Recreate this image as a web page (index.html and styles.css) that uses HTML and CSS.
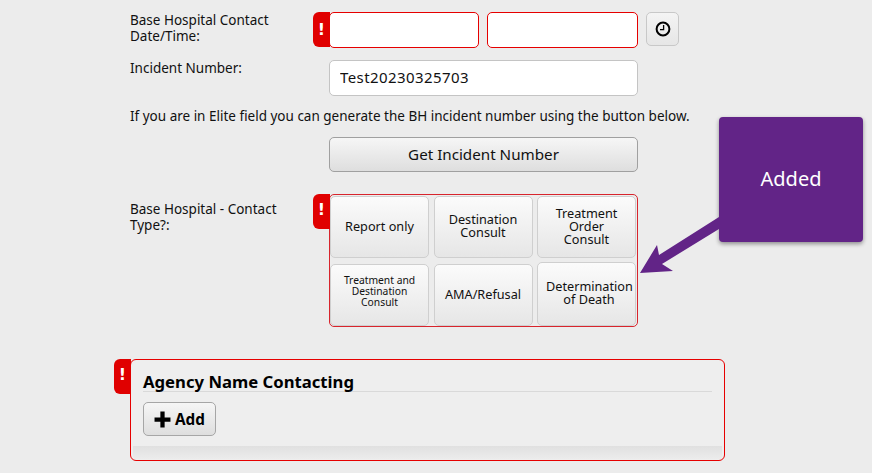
FILE: index.html
```html
<!DOCTYPE html>
<html lang="en">
<head>
<meta charset="utf-8">
<title>Base Hospital Contact</title>
<link rel="stylesheet" href="styles.css">
</head>
<body>
<main class="form">
  <div class="row row-date">
    <label class="label">Base Hospital Contact Date/Time:</label>
    <div class="control inline">
      <span class="badge">!</span>
      <input class="field field-req" type="text">
      <input class="field field-req field-req-last" type="text">
      <button class="clock" type="button" aria-label="Now">
        <svg width="16" height="16" viewBox="0 0 16 16"><circle cx="8" cy="8" r="6.400" fill="none" stroke="#000" stroke-width="2"/><path d="M8.600 4v4.600H5" fill="none" stroke="#000" stroke-width="1.300"/></svg>
      </button>
    </div>
  </div>
  <div class="row row-incident">
    <label class="label">Incident Number:</label>
    <div class="control"><input class="field field-wide" type="text" value="Test20230325703"></div>
  </div>
  <p class="hint">If you are in Elite field you can generate the BH incident number using the button below.</p>
  <div class="row row-get">
    <span class="label"></span>
    <div class="control"><button class="get" type="button">Get Incident Number</button></div>
  </div>
  <div class="row row-type">
    <label class="label">Base Hospital - Contact Type?:</label>
    <div class="control">
      <span class="badge">!</span>
      <div class="choices">
        <button class="choice" type="button">Report only</button>
        <button class="choice" type="button">Destination Consult</button>
        <button class="choice choice-narrow" type="button">Treatment Order Consult</button>
        <button class="choice choice-small" type="button">Treatment and Destination Consult</button>
        <button class="choice" type="button">AMA/Refusal</button>
        <button class="choice choice-up" type="button">Determination of Death</button>
      </div>
    </div>
  </div>
  <section class="card">
    <span class="badge badge-card">!</span>
    <h2 class="card-title">Agency Name Contacting</h2>
    <button class="add" type="button">
      <svg width="17" height="17" viewBox="0 0 16 16"><path d="M6 .5h4v5.500h5.500v4H10v5.500H6V10H.5V6H6z" fill="#000"/></svg>
      Add
    </button>
    <div class="card-foot"></div>
  </section>
</main>
<aside class="callout">Added</aside>
<svg class="arrow" width="90" height="65" viewBox="0 0 90 65"><path d="M81 0 L81 12 L24 47 L35 54 L2 56 L19 28 L21 38 Z" fill="#622487"/></svg>
</body>
</html>
```
FILE: styles.css
```css
* { box-sizing: border-box; }
html, body { margin: 0; height: 473px; overflow: hidden; }
body {
  position: relative;
  background: #ececec;
  color: #111;
  font: 13.500px/16px "Noto Sans", "Open Sans", sans-serif;
}
.form { padding: 12px 0 0 130px; width: 725px; }
.row { display: flex; }
.label { width: 199px; flex: none; padding-right: 30px; }
.control { position: relative; }
.inline { display: flex; gap: 8px; align-items: flex-start; }
.row-incident { margin-top: 12px; }
.row-get { margin-top: 13px; }
.row-type { margin-top: 22px; }
.row-type .label { padding-top: 7px; }
.hint { margin: 12px 0 0; white-space: nowrap; }
.field {
  display: block;
  width: 150px;
  height: 36px;
  padding: 0 10px 2px;
  background: #fff;
  border: 1px solid #c4c4c4;
  border-radius: 5px;
  font: 15px "Noto Sans", sans-serif;
  letter-spacing: .42px;
  color: #111;
}
.field-req { border-color: #e60000; }
.field-req-last { width: 151px; }
.field-wide { width: 309px; }
.clock {
  display: flex;
  align-items: center;
  justify-content: center;
  width: 33px;
  height: 34px;
  padding: 0;
  border: 1px solid #c8c8c8;
  border-radius: 5px;
  background: linear-gradient(#f4f4f4, #e6e6e6);
}
.get {
  display: block;
  width: 309px;
  height: 35px;
  padding: 0 0 2px;
  border: 1px solid #a0a0a0;
  border-radius: 5px;
  background: linear-gradient(#f6f6f6, #dedede);
  font: 15.200px "Noto Sans", sans-serif;
  color: #111;
}
.badge {
  position: absolute;
  z-index: 2;
  left: -16px;
  top: 0;
  width: 17px;
  height: 35px;
  background: #e00000;
  border-radius: 6px 0 0 6px;
  color: #fff;
  font: bold 16px/36px "DejaVu Sans", sans-serif;
  text-align: center;
}
.row-type .badge { line-height: 32px; }
.choices {
  display: grid;
  grid-template-columns: repeat(3, 99px);
  grid-auto-rows: 62px;
  column-gap: 4.500px;
  row-gap: 6px;
  width: 309px;
  height: 133px;
  padding: 1px 0 0;
  border: 1px solid #d8242c;
  border-radius: 5px;
  position: relative;
}
.choice {
  padding: 0 3px 2px;
  border: 1px solid #cfcfcf;
  border-radius: 5px;
  background: linear-gradient(#fbfbfb, #e6e6e6);
  font: 12.700px/13px "Noto Sans", sans-serif;
  color: #111;
}
.choice-narrow { padding: 0 14px 2px; }
.choice-small { font-size: 10.300px; line-height: 11px; padding: 0 6px 7px; }
.choice-up { margin-top: -2px; padding-left: 8px; }
.card {
  position: relative;
  width: 595px;
  height: 102px;
  margin-top: 32px;
  padding: 12px 12px 0;
  background: #eeeeee;
  border: 1px solid #e60000;
  border-radius: 6px;
}
.badge-card { left: -17px; top: -1px; line-height: 32px; }
.card-title {
  margin: 0;
  height: 20px;
  border-bottom: 1px solid #d9d9d9;
  font: bold 16.700px/20px "Noto Sans", sans-serif;
  color: #000;
}
.add {
  display: flex;
  align-items: center;
  gap: 4px;
  width: 73px;
  height: 34px;
  margin-top: 10px;
  padding: 0 0 0 10px;
  border: 1px solid #a6a6a6;
  border-radius: 5px;
  background: linear-gradient(#f6f6f6, #dedede);
  font: bold 15.300px "Noto Sans", sans-serif;
  color: #000;
}
.card-foot {
  position: absolute;
  left: 2px;
  right: 2px;
  bottom: 1px;
  height: 13px;
  background: linear-gradient(#e0e0e0, #ececec);
}
.callout {
  position: absolute;
  left: 719px;
  top: 117px;
  width: 144px;
  height: 125px;
  padding-bottom: 2px;
  display: flex;
  align-items: center;
  justify-content: center;
  background: #622487;
  border-radius: 4px;
  box-shadow: 0 2px 4px rgba(0, 0, 0, .4);
  color: #fff;
  font: 20px "Noto Sans", sans-serif;
}
.arrow { position: absolute; left: 638px; top: 217px; }
```
